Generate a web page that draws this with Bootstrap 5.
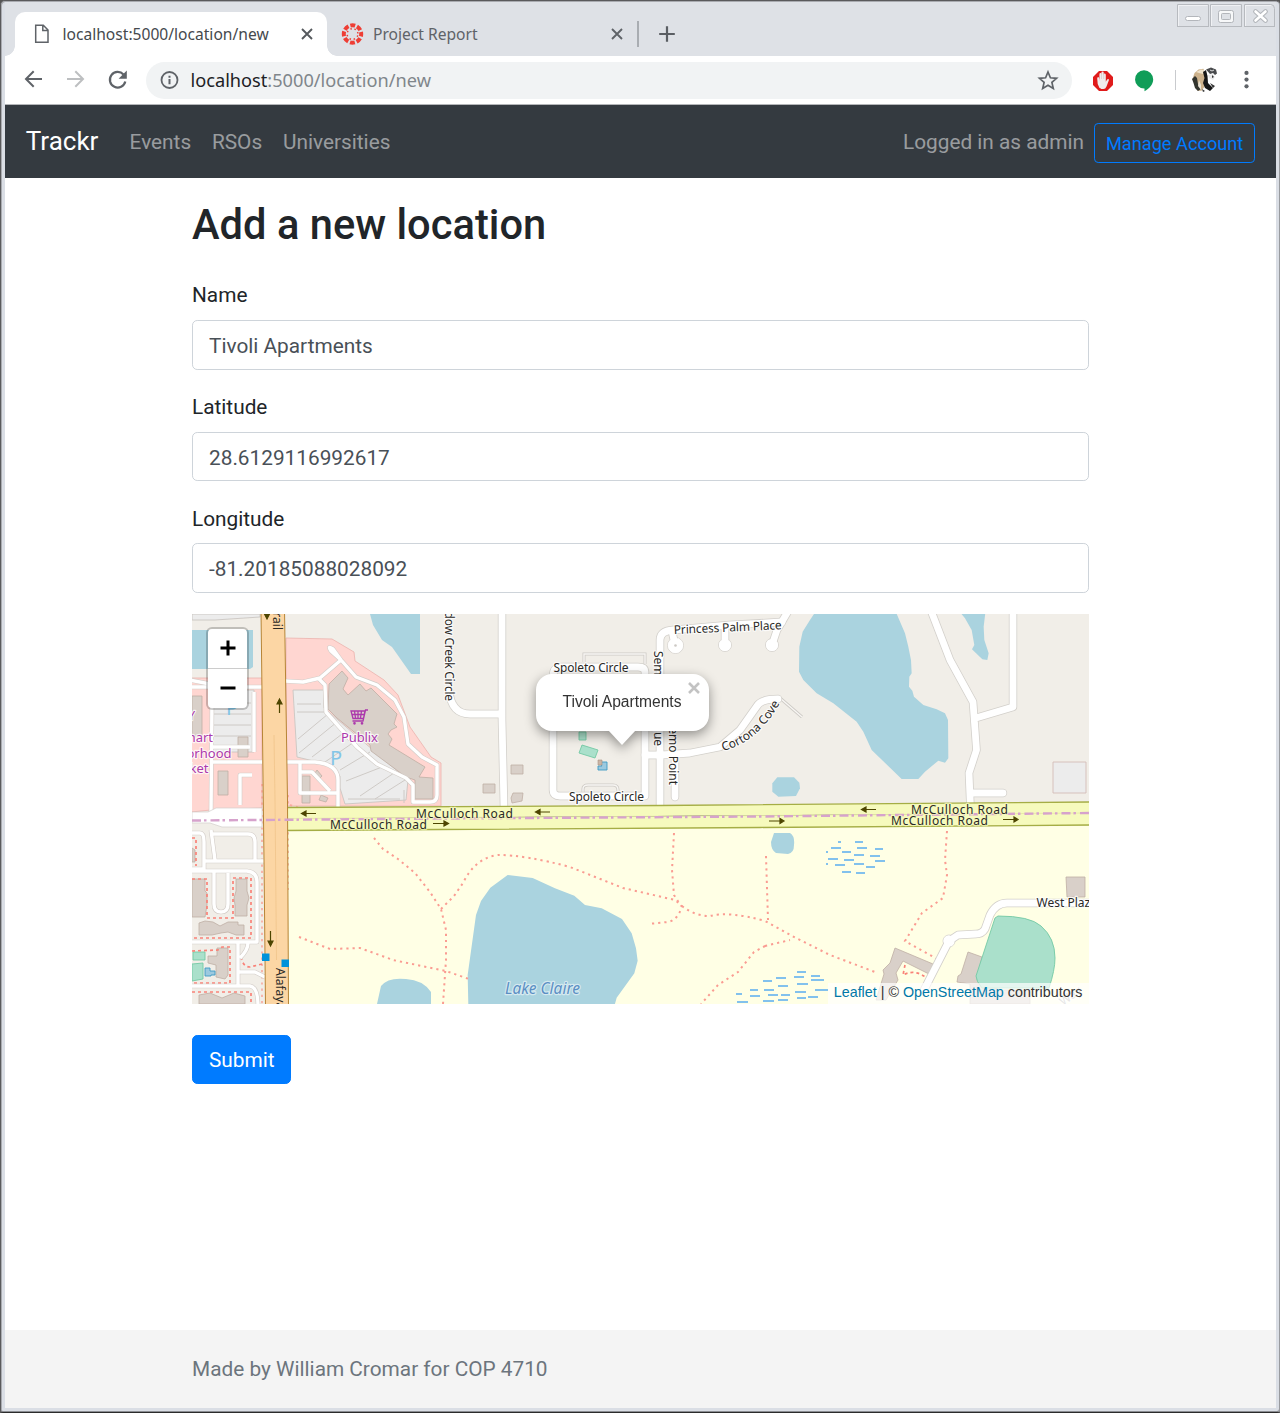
<!DOCTYPE html>
<html lang="en">
<head>
<meta charset="utf-8">
<meta name="viewport" content="width=device-width, initial-scale=1">
<title>Trackr - Add a new location</title>
<link href="https://cdn.jsdelivr.net/npm/bootstrap@5.3.0/dist/css/bootstrap.min.css" rel="stylesheet">
<style>
html{font-size:20.8px}
body{font-family:Roboto,sans-serif;color:#212529;height:1413px;overflow:hidden;background:#555}
svg{display:block;flex:none}
.win{height:1413px;background:#dadee5;border:1px solid #5a5a5c;border-right-color:#999b9f;border-bottom:1px solid #2b2b2b;box-shadow:inset 1px 1px 0 #a9abb0,inset 0 -1px 0 #8b8d92;padding:1px 3px 4px 4px;border-radius:5px 5px 3px 3px}
.tabstrip{height:54px;background:#dee1e6;font:15.6px/22px "Noto Sans",sans-serif;padding-left:10px}
.tab-on{width:312px;height:44px;background:#fff;border-radius:10px 10px 0 0;color:#45494d;padding:0 13px 0 18px;position:relative}
.tab-on::before,.tab-on::after{content:"";position:absolute;bottom:0;width:10px;height:10px}
.tab-on::before{left:-10px;background:radial-gradient(circle at 0 0,transparent 9.5px,#fff 10px)}
.tab-on::after{right:-10px;background:radial-gradient(circle at 100% 0,transparent 9.5px,#fff 10px)}
.tab-on span,.tab-off span{margin-bottom:1px}
.tab-off{width:310px;height:44px;color:#5f6368;padding:0 13px 0 14px}
.tab-sep{width:1.5px;height:26px;background:#a9adb2}
.toolbar{height:49px;background:#fff;border-bottom:1px solid #b4b6b9;padding:0 18px 0 16px}
.omni{height:37px;border-radius:19px;background:#f1f3f4;font:18.2px/27px "Noto Sans",sans-serif;color:#80868b;margin:0 19px 0 17px;padding:0 12px}
.omni b{font-weight:400;color:#202124}
.view{height:1303px;background:#fff}
.bar{height:73px;background:#343a40;padding:0 20.8px}
.bar .navbar-brand{font-size:26px;color:#fff;padding:6.5px 0}
.bar .nav-link,.who{color:rgba(255,255,255,.5);position:relative;top:1px}
.acct{font-size:18.2px;height:40px;padding:6px 10.9px 4px;border-radius:4.2px;color:#007bff;border-color:#007bff;margin:3px 0 0 10px;line-height:1.5}
.page{width:897px;padding-top:22.4px}
.page h2{font-size:41.6px;line-height:50px;margin:0 0 30px;letter-spacing:.03px}
.page .form-label{line-height:31.2px;margin-bottom:8.6px}
.page .form-control{height:49.4px;border-radius:5.2px;border-color:#ced4da;color:#495057;padding:9px 15.6px 6.6px 16px}
.fgroup{margin-bottom:22.4px}
.fgroup.last{margin-bottom:21px}
.map{height:390px;position:relative;overflow:hidden;margin-bottom:31px;font-family:"Liberation Sans",Arial,sans-serif}
.map svg text{font-family:"Noto Sans",sans-serif;font-size:12px;fill:#2a2926;stroke:#fff;stroke-opacity:.75;stroke-width:2.4px;paint-order:stroke;stroke-linejoin:round}
.map svg .shop{fill:#ac39ac;font-size:13px}
.map svg .lot{fill:#83c5e7;font-size:20px;stroke-width:0}
.map svg .lake{fill:#5b8fc4;font-style:italic;font-size:15.5px;stroke-opacity:.5}
.zoomer{position:absolute;left:14px;top:13px;border:2px solid rgba(0,0,0,.2);background-clip:padding-box;border-radius:6px;width:43px;height:83px;background-color:#fff}
.zoomer div{height:39px;display:flex;align-items:center;justify-content:center}
.zoomer div+div{border-top:1px solid #ccc;height:40px}
.pop{position:absolute;left:344px;top:60px;width:173px;height:57px;border-radius:16px;background:#fff;color:#333;font-size:15.6px;line-height:55px;text-align:center;text-indent:-1px;filter:drop-shadow(0 4px 6px rgba(0,0,0,.4))}
.pop::after{content:"";position:absolute;left:72px;top:56px;border:14px solid transparent;border-top:15px solid #fff;border-bottom:0}
.pop svg{position:absolute;right:9px;top:8px}
.attr{position:absolute;right:0;bottom:0;height:21px;line-height:19px;padding:0 6.500px 0 6px;background:rgba(255,255,255,.7);font-size:14.3px;color:#333;white-space:nowrap}
.attr span{color:#0078a8}
.send{background:#007bff;border-color:#007bff;border-radius:5.2px;height:49px;padding:9px 15.6px 6px 16px;line-height:1.5}
.foot{height:78px;background:#f4f4f4;color:#6c757d;padding-top:2px}
.foot div{width:897px}
</style>
<script src="https://cdn.jsdelivr.net/npm/bootstrap@5.3.0/dist/js/bootstrap.bundle.min.js"></script>
</head>
<body>
<div class="win d-flex flex-column">
  <div class="tabstrip d-flex align-items-end flex-shrink-0">
    <div class="tab-on d-flex align-items-center">
      <svg width="18" height="20" viewBox="0 0 18 20" fill="none" stroke="#5f6368" stroke-width="1.5"><path d="M2.7 1.300h7.600l4.700 4.700v12.200H2.700zM9.800 1.500v5h5"/></svg>
      <span style="margin-left:11.500px">localhost:5000/location/new</span>
      <svg class="ms-auto" width="14" height="14" viewBox="0 0 14 14" stroke="#55595d" stroke-width="1.9"><path d="M2 2l10 10M12 2L2 12"/></svg>
    </div>
    <div class="tab-off d-flex align-items-center">
      <svg width="23" height="23" viewBox="-11.5 -11 23 23"><g fill="none" stroke="#ee3e35"><circle r="8.7" stroke-width="4" stroke-dasharray="4.900 1.933" stroke-dashoffset="2.450"/><circle r="5.4" stroke-width="1.5" stroke-dasharray="1.500 2.741" stroke-dashoffset="2.870"/></g></svg>
      <span style="margin-left:9px">Project Report</span>
      <svg class="ms-auto" width="14" height="14" viewBox="0 0 14 14" stroke="#5f6368" stroke-width="1.9"><path d="M2 2l10 10M12 2L2 12"/></svg>
    </div>
    <div class="d-flex align-items-center" style="height:44px">
      <div class="tab-sep"></div>
      <svg style="margin-left:19px" width="18" height="18" viewBox="0 0 18 18" stroke="#5a5e63" stroke-width="2.2"><path d="M9 1.200v15.600M1.200 9h15.600"/></svg>
    </div>
    <svg class="ms-auto align-self-start" style="margin-top:2px" width="99" height="24" viewBox="1177 4 99 24" fill="none">
      <g stroke="#b7babf"><path d="M1177.5 27V4.500h31V27M1210.500 27V4.500h31V27M1244.500 27V4.500h26q4 0 4 4V27M1177.500 26.500h31M1210.500 26.500h31M1244.500 26.500h30" /></g>
      <g stroke="#fff" opacity=".55"><path d="M1178.500 26V5.500h29M1211.500 26V5.500h29M1245.500 26V5.500h26"/></g>
      <rect x="1185.500" y="16.500" width="15" height="4" rx="2" fill="#fff" stroke="#b3b6bb"/>
      <rect x="1218.500" y="10.500" width="15" height="12" rx="2" fill="#f7f8f9" stroke="#b3b6bb"/><rect x="1221.500" y="13.500" width="9" height="6" rx="1" fill="#dee1e6" stroke="#b3b6bb"/>
      <path d="M1255.500 11.500l10 9M1265.500 11.500l-10 9" stroke="#b3b6bb" stroke-width="4.800" stroke-linecap="round"/><path d="M1255.500 11.500l10 9M1265.500 11.500l-10 9" stroke="#fff" stroke-width="2.600" stroke-linecap="round"/>
    </svg>
  </div>
  <div class="toolbar d-flex align-items-center flex-shrink-0">
    <svg width="24" height="24" viewBox="21 68 24 24" fill="none" stroke="#5f6368" stroke-width="2"><path d="M42 79H26.500M33.700 71.300L26 79l7.700 7.700"/></svg>
    <svg style="margin-left:18px" width="24" height="24" viewBox="63 68 24 24" fill="none" stroke="#bdbfc1" stroke-width="2"><path d="M67 79h15.500M75.300 71.300L83 79l-7.700 7.700"/></svg>
    <svg style="margin-left:18px" width="24" height="24" viewBox="105 68 24 24"><path d="M123.500 74.500a7.800 7.800 0 1 0 1.800 7" fill="none" stroke="#5f6368" stroke-width="2.200"/><path d="M126.800 70.500v8.200h-8.200z" fill="#5f6368"/></svg>
    <div class="omni d-flex align-items-center flex-grow-1">
      <svg width="22" height="22" viewBox="0 0 22 22"><circle cx="11.500" cy="11" r="8" fill="none" stroke="#5f6368" stroke-width="1.800"/><path d="M11.500 10v5.200M11.500 6.700v2" stroke="#5f6368" stroke-width="2"/></svg>
      <span style="margin-left:10.500px"><b>localhost</b>:5000/location/new</span>
      <svg class="ms-auto" width="24" height="24" viewBox="0 0 24 24"><path d="M12 4l2.400 5.800 6.200.5-4.700 4.100 1.400 6.100L12 17.300 6.700 20.500l1.400-6.100-4.700-4.100 6.200-.5z" fill="none" stroke="#5f6368" stroke-width="1.700"/></svg>
    </div>
    <svg width="24" height="24" viewBox="1091 68 24 24"><path d="M1099 71h8l6 6v8l-6 6h-8l-6-6v-8z" fill="#e01b1b"/><path d="M1099.500 88q-2.500-4-2.300-9.500 0-1.500 1-1.500t1.200 4v-6.500q0-1.400 1-1.400t1 1.400v-1.700q0-1.300 1.200-1.300t1.100 1.300v2q.1-1.300 1.100-1.200t1 1.300v6.900q1-2.300 2-2.800 1.700-.3 1 1.500l-2.300 6q-1 2.500-3 2.500h-2q-1 0-1-.7z" fill="#f0eeee"/><path d="M1101.500 79v-5M1103.700 79v-5.500" stroke="#c9bcbc" stroke-width=".5"/></svg>
    <svg style="margin-left:17px" width="24" height="24" viewBox="1132 68 24 24"><path d="M1144 70.200a9.200 9.200 0 0 1 9.200 9.300c0 5-4 9-8.700 11.800v-2.700a9.200 9.200 0 1 1-.5-18.400z" fill="#109d58"/></svg>
    <div style="margin-left:19px;width:1px;height:20px;background:#c9cbce"></div>
    <svg style="margin-left:16.500px" width="26" height="26" viewBox="1192 67 26 26">
      <path d="M1192.500 79l2-6 4-3.500 5-.8 1.500 6 .5 7-1 5-3 4-4 0-3-7z" fill="#cdb28c"/><path d="M1196 72l5-2.500 3 .5-1 4-4-1z" fill="#efe3cc"/>
      <path d="M1192 79l3-3 2 2 1 6 3 5-3 2-3-3-1.500-5z" fill="#33352f"/><path d="M1199 80l2 5 0 5-3-4z" fill="#e9e3d5"/>
      <path d="M1203 72l3-2 1.500 6 .5 7 5 5-3 3-5-3-2-5 1.500-5z" fill="#171717"/>
      <path d="M1206 69.500l5-2 5 2 1 4-2 1.500-2-2-3 1z" fill="#494b4d"/><path d="M1210 70l2 1 2-1" stroke="#ddd" fill="none"/>
      <path d="M1208 75l5-1 2 3-2 3-4-2z" fill="#eaeaea"/><path d="M1212 75l2 2-2 1zM1210 83l5 3-2 2zM1202 89l3 2-2 1z" fill="#333"/>
    </svg>
    <svg style="margin-left:16px" width="24" height="24" viewBox="0 0 24 24" fill="#5f6368"><circle cx="12.500" cy="4.900" r="2.100"/><circle cx="12.500" cy="11.600" r="2.100"/><circle cx="12.500" cy="18.300" r="2.100"/></svg>
  </div>

  <div class="view d-flex flex-column">
    <nav class="bar navbar navbar-expand navbar-dark flex-shrink-0">
      <a class="navbar-brand">Trackr</a>
      <ul class="navbar-nav me-auto">
        <li class="nav-item"><a class="nav-link">Events</a></li>
        <li class="nav-item"><a class="nav-link">RSOs</a></li>
        <li class="nav-item"><a class="nav-link">Universities</a></li>
      </ul>
      <span class="who">Logged in as admin</span>
      <a class="acct btn btn-sm btn-outline-primary">Manage Account</a>
    </nav>

    <main class="page mx-auto flex-grow-1">
      <h2 class="fw-medium" style="font-weight:500">Add a new location</h2>
      <div class="fgroup"><label class="form-label d-block" for="nm">Name</label><input id="nm" class="form-control" value="Tivoli Apartments"></div>
      <div class="fgroup"><label class="form-label d-block" for="lat">Latitude</label><input id="lat" class="form-control" value="28.6129116992617"></div>
      <div class="fgroup last"><label class="form-label d-block" for="lng">Longitude</label><input id="lng" class="form-control" value="-81.20185088028092"></div>

      <div class="map">
        <svg width="897" height="390" viewBox="192 614 897 390">
          <defs>
            <g id="wide" fill="none" stroke-linejoin="round" stroke-linecap="round">
              <path d="M502 610V720L504 808M449 690Q451 714 470 714H502"/>
              <path d="M553 675V790Q553 796 560 796H645V755V672Q645 667 638 667H562Q553 667 553 676"/>
              <path d="M660 810V640Q660 631 673 630L730 625 782 622M645 755H662L690 753 720 747 740 730 757 706Q761 699 778 699M675 757V797"/>
              <path d="M675 645L672 631M725 645V626M772 645L777 630 790 608"/>
              <path d="M930 608L950 660 973 702 976.500 750 969 773 970.500 808M976 718L1013 707V608M970 793H1003"/>
              <path d="M1092 903H1007Q996 903 990 915L985 929Q982 934 976 934L958 935 949 941 924 990"/>
            </g>
            <g id="slim" fill="none" stroke-linejoin="round">
              <path d="M285 681L303 682 320 678 341 660 331 651Q327 645 333 649L341 660 356 677 377 685 395 700 404 717 408 744 422 757 437 765V795Q437 802 430 802H413V785L406 778 377 764 357 747 326 712 325 685 318 678M285 762H315Q338 764 338 780V808M300 762V793H337M300 772H312L330 791"/>
              <path d="M190 687H262M190 680L210 684M212 700L211 812M212 762H262M212 747H250M240 805V775H252M254 692V752"/>
              <path d="M190 833H200Q204 833 204 842V869H190M211 830L215 860M211 834H248Q255 834 255 842V861M204 861H264M190 871H247Q257 872 257 882V942H190M214 872V904Q214 912 221 912 228 912 228 904V873M238 943V985M248 943Q248 950 240 958M239 972H255L265 977M190 986H250Q258 987 258 1006"/>
            </g>
            <g id="trail" fill="none">
              <path d="M374 838L383 849 398 859 415 873 430 892 441 909 446 930 446 960 443 1004M441 909L454 896 463 883Q475 858 498 855 525 855 570 867L623 888 675 900 682 906Q678 920 668 922L648 924M682 906Q695 916 710 916 730 911 765 921L796 938 830 955 875 972M674 833L672 870 674 895 681 906M299 937L330 949 360 948 393 960 446 971 469 979M766 856L768 920M765 946L790 940 M765 946L754 952 738 972 718 985 701 1004M947 831L945 860 947 875 943 898 922 913 905 941 937 959"/>
              <path d="M288 795V890M262 784V1004M290 805L300 808" stroke-opacity=".7"/>
            </g>
          </defs>
          <rect x="192" y="614" width="897" height="390" fill="#f1eee8"/>
          <path d="M286 830L1089 826V1004H286z" fill="#ffffe5"/>
          <!-- water -->
          <g fill="#aad3df">
            <path d="M192 630H253V667L250 669H192zM370 614H420V674H411L392 647 382 640 373 625z"/>
            <g transform="translate(690 610) scale(.33333)"><path d="M380 0L360 30 338 65 328 110 327 185 340 210 380 250 430 280 500 335 520 365 545 420 635 507H685L705 485 745 452 765 458 775 445 774 330 765 310 740 298 700 285 672 260 667 242 657 230 658 200 665 190 663 150 655 110 645 70 615 0zM805 0H887L881 50 883 90 896 130 892 150 877 148 846 118 853 105 845 60 825 25z"/><path d="M262 502H312L328 518 330 535 318 558 265 560 247 545 247 520z"/></g>
            <g transform="translate(440 800) scale(.33333)"><path d="M203 225L278 234 345 265 403 287 435 315 485 325 546 357 575 400 588 445 593 482 583 520 530 593 524 615H85L83 525 108 345 123 303 151 263z"/></g>
            <path d="M774 833H790Q795 836 794 845 794 853 788 854L776 853Q771 850 771 842zM377 1004L381 986Q388 977 406 979 423 980 431 992V1004z"/>
          </g>
          <!-- retail area -->
          <g fill="#ffd6d1" stroke="#ebb3ad" stroke-width=".8">
            <path d="M286 638L332 639 354 652 355 661 384 680 398 695 410 727 431 757 441 763V806H286zM191 678H262V808L211 810 191 812z"/>
          </g>
          <g fill="#ececec" stroke="#cbc6c2" stroke-width=".9">
            <path d="M192 614H260V617L215 620H192zM212 690H254V752H211zM293 690H324V708L408 780 406 800 345 804 340 788 340 776 330 765 297 757z"/>
            <path d="M212 703H251M212 714H251M212 725H251M212 736H251M297 704H321M297 712H324M298 739L328 714M299 753L337 722M312 757L346 731M325 762L357 740M340 770L370 752M346 781L382 767M360 796L394 773M375 799L405 780M404 790V803M348 799H400"/>
            <path d="M1053 762H1086V793H1053z" stroke="#d5bcb8"/>
          </g>
          <!-- buildings -->
          <g fill="#d9d0c9" stroke="#bfafa5" stroke-width=".8">
            <path d="M329 684L342 671 348 678 343 689 348 695 360 684 366 691 371 688 397 714 396 717 394 724 397 727 391 730 388 734 392 739 389 745 425 767 419 777 433 778V799H415V780L406 777 371 751 370 745 337 718 328 709z"/>
            <path d="M192 696H202V736H192zM238 737H248V757H238zM218 771H228V795H218zM302 776H310V803H302zM313 776L317 770 322 776 318 780zM319 800L321 795 328 798 326 802z"/>
            <path d="M192 879H205V891L207 893V905L205 917H192zM236 879H247V891L249 898 247 905V916H235V905L234 898 236 891zM199 923L205 921 213 922 220 926 228 922H238V925H244V935H236L228 932 221 933 212 935H199zM217 948H228V975L225 979 216 977V965L208 963V956H217zM199 995L210 993 222 998 234 993 245 996V1004H199zM192 848L195 850V862H192z"/>
            <path d="M511 765H523V774H511zM483 784H495V793H483zM511 798L513 793H523L522 801 512 803zM1066 877H1085V897H1067z"/>
            <path d="M895 948L933 964 929 974 903 961 896 973 898 980 886 1000 876 1000 884 974 883 970 890 963zM968 952L982 957 977 980 1000 990 1030 990V1004H970V984L957 982 958 976 961 974z"/>
          </g>
          <g fill="#aae0cb" stroke="#74c9a5" stroke-width=".9">
            <path d="M995 918L998 916Q1030 916 1041 926 1055 938 1055 958 1055 970 1049 988H982Q976 981 976 976z"/>
            <path d="M582 745L598 750 595 758 579 753zM579 732H586V740H579zM193 952H205V960H193zM192 964L203 963V979L192 981z"/>
            <path d="M599 762H607V770H598V766H602zM205 968H210V971H215V975H211V976H205z" fill="#9cc9df" stroke="#3f9ac4"/>
          </g>
          <path d="M598 760H602V765H598z" fill="#cbb5a6" stroke="#a9907f" stroke-width=".6"/>
          <!-- wetland marks -->
          <path d="M831 848H841M855 842H863M842 852H851M857 848H867M854 855H864M875 849H883M870 856H880M828 859H838M844 860H854M875 861H885M835 865H845M854 864H864M866 867H875M842 872H851M856 873H865M838 842H841M826 852H828M826 864H828M776 978H786M797 972H806M811 976H820M794 977H804M763 981H772M797 984H808M811 980H824M750 990H758M764 990H774M778 986H788M795 992H806M815 990H828M736 994H742M750 996H760M768 995H778M781 995H790M797 998H806M737 1002H748M763 1001H774M778 1000H788M808 997H818" stroke="#5aadf0" stroke-width="1.500"/>
          <use href="#trail" stroke="#fa9c92" stroke-width="2" stroke-dasharray="2.200 4"/>
          <path d="M192 879H207V918H233V878H251V938H192M192 838H196V866M192 951L218 950 222 947H230V983H192M192 992H251V1004M241 957Q243 967 250 967L262 964M905 965L903 975Q916 968 929 980" fill="none" stroke="#f98278" stroke-width="1.700" stroke-dasharray="3 3"/>
          <g fill="none" stroke="#cdcac5" stroke-width="3"><path d="M584 662V654H645V664M583 796V789Q583 785 588 785H613Q618 785 618 790V796M780 698L802 717"/></g>
          <g fill="none" stroke="#f8f6f3" stroke-width="1.400"><path d="M584 662V654H645V664M583 796V789Q583 785 588 785H613Q618 785 618 790V796M780 698L802 717"/></g>
          <use href="#slim" stroke="#d3cdc8" stroke-width="4.600"/><use href="#slim" stroke="#fff" stroke-width="3.400"/>
          <g fill="#fff" stroke="#d6d3ce" stroke-width=".9"><circle cx="675.500" cy="645.500" r="8"/><circle cx="725" cy="645" r="6.500"/><circle cx="772" cy="645" r="6.500"/><circle cx="949" cy="941" r="6"/></g>
          <use href="#wide" stroke="#d3d0cb" stroke-width="8.400"/><use href="#wide" stroke="#fff" stroke-width="6.800"/>
          <g fill="#fff"><circle cx="675.500" cy="645.500" r="7.500"/><circle cx="725" cy="645" r="6"/><circle cx="772" cy="645" r="6"/><circle cx="949" cy="941" r="5.500"/></g>
          <circle cx="675.500" cy="645.500" r="1.300" fill="#ccc9c4"/>
          <!-- main roads -->
          <path d="M192 812H208L216 808 262 808V827H222L210 823H192z" fill="#fff" stroke="#d3cfcb" stroke-width=".7"/>
          <path d="M285 807.500L660 805.500 1090 802V825.500L760 828 285 831z" fill="#f6fabd"/>
          <path d="M285 807.500L660 805.500 1090 802M285 830.500L440 829.500 760 827.500 1090 825" fill="none" stroke="#a5ad45" stroke-width="1.300"/>
          <path d="M285 818.500L700 816 1090 813" stroke="#e5e8a5" stroke-width=".8"/>
          <path d="M261 610L264 860 265.500 1006H288.500L287.500 800 284.500 610z" fill="#fcd6a4"/>
          <path d="M261 610L264 860 265.500 1006M284.500 610L287.500 800 288.500 1006" fill="none" stroke="#b78536" stroke-width="1"/>
          <path d="M274 735L275 800 276.500 960" stroke="#f0c48a" stroke-width=".8" fill="none"/>
          <path d="M192 820.500L450 818.500 760 816.500 1090 813" fill="none" stroke="#d6a2cc" stroke-width="2.400" stroke-dasharray="9 3 2.500 4"/>
          <!-- one-way arrows -->
          <g stroke="#4d4500" fill="#4d4500">
            <path d="M316 813.500H306M306 811L301.500 813.500 306 816zM433 823.500H444M444 821L448.500 823.500 444 826zM550 812H540M540 809.500L535.500 812 540 814.500zM769 821H780M780 818.500L784 821 780 823.500zM876 809.500H866M866 807L861.500 809.500 866 812zM1003 819.500H1014M1014 817L1018 819.500 1014 822z" stroke-width="1.200"/>
            <path d="M279.500 713V703M277 704L279.500 699 282 704zM270.500 931V941M268 941L270.500 946 273 941zM264 613L267 619 270 613z" stroke-width="1.200"/>
          </g>
          <path d="M262 953.500h7.500v7.500H262zM281.500 959.500h7.500v7.500h-7.500z" fill="#0092da"/>
          <!-- labels -->
          <text transform="translate(445 701) rotate(90)" text-anchor="end" textLength="113">Meadow Creek Circle</text>
          <text transform="translate(273 630) rotate(90)" text-anchor="end" style="stroke-width:0">Trail</text>
          <text transform="translate(276 968) rotate(90)" style="stroke-width:0">Alafaya</text>
          <text transform="translate(654 651) rotate(90)" textLength="95">Semoran Avenue</text>
          <text transform="translate(669 785) rotate(90)" text-anchor="end">Sanremo Point</text>
          <text transform="translate(674 634) rotate(-2.500)" textLength="108">Princess Palm Place</text>
          <text x="553.500" y="671.500" textLength="75">Spoleto Circle</text>
          <text x="569" y="801" textLength="75">Spoleto Circle</text>
          <path id="cove" d="M723 751Q758 742 780 703" fill="none"/>
          <text><textPath href="#cove">Cortona Cove</textPath></text>
          <g><text x="416" y="818" textLength="97" style="stroke:#f6fabd">McCulloch Road</text><text x="330" y="828.500" textLength="97" style="stroke:#f6fabd">McCulloch Road</text><text x="911" y="814" textLength="97" style="stroke:#f6fabd">McCulloch Road</text><text x="891" y="824.500" textLength="97" style="stroke:#f6fabd">McCulloch Road</text></g>
          <text x="1036.500" y="907">West Plaza</text>
          <text transform="translate(1063 1006) rotate(-35)" style="fill:#aaa">Way</text>
          <text class="lake" x="505" y="994" textLength="75">Lake Claire</text>
          <text class="shop" x="341" y="742" textLength="37">Publix</text>
          <text class="shop" x="213" y="742" text-anchor="end">mart</text><text class="shop" x="231.500" y="758" text-anchor="end">orhood</text><text class="shop" x="208.500" y="773" text-anchor="end">ket</text><text class="shop" x="195" y="720" text-anchor="end">Y</text>
          <text class="lot" x="330" y="765">P</text><text class="lot" x="226" y="715">P</text>
          <g fill="none" stroke="#ac39ac" stroke-width="1.300"><path d="M368 710H365.500L363 721H352.500M351 711H365L363.500 718.500H353zM354.500 711L355.500 718M358 711V718M361.500 711L360.500 718M352 714.500H364"/><circle cx="354.500" cy="723.300" r=".7"/><circle cx="362" cy="723.300" r=".7"/></g>
        </svg>
        <div class="zoomer">
          <div><svg width="18" height="18" viewBox="0 0 18 18" stroke="#000" stroke-width="3"><path d="M9 1.500v15M1.500 9h15"/></svg></div>
          <div><svg width="18" height="18" viewBox="0 0 18 18" stroke="#000" stroke-width="3"><path d="M1.500 9h15"/></svg></div>
        </div>
        <div class="pop">Tivoli Apartments<svg width="12" height="12" viewBox="0 0 12 12" stroke="#c3c3c3" stroke-width="2.600"><path d="M1 1l10 10M11 1L1 11"/></svg></div>
        <div class="attr"><span>Leaflet</span> | © <span>OpenStreetMap</span> contributors</div>
      </div>
      <button class="send btn btn-primary">Submit</button>
    </main>

    <footer class="foot d-flex align-items-center justify-content-center flex-shrink-0"><div>Made by William Cromar for COP 4710</div></footer>
  </div>
</div>
</body>
</html>
